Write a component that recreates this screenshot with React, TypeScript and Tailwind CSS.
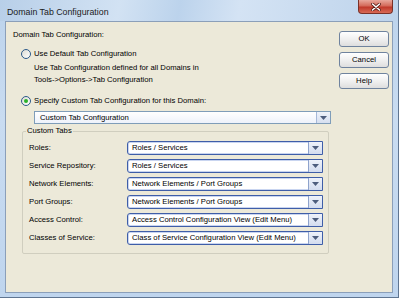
import React from "react";

const font = { fontFamily: '"Liberation Sans", Arial, sans-serif' };

function Arrow() {
  return (
    <svg width="7" height="4" viewBox="0 0 7 4">
      <path d="M0 0 H7 L3.5 4 Z" fill="#4d5d7d" />
    </svg>
  );
}

function Radio({ checked }: { checked?: boolean }) {
  return (
    <div className="w-[10px] h-[10px] rounded-full border border-[#2c5a8a] bg-[linear-gradient(135deg,#dcdcd4,#ffffff)] flex items-center justify-center shrink-0">
      {checked && <div className="w-[4px] h-[4px] rounded-full bg-[#2bb22b]" />}
    </div>
  );
}

function Combo({ value, big }: { value: string; big?: boolean }) {
  if (big) {
    return (
      <div className="h-[13px] w-[297px] border border-[#7f9db9] bg-white flex items-stretch">
        <div className="flex-1 flex items-center pl-[5px] bg-[linear-gradient(180deg,#ffffff,#eef2fb)] text-black">{value}</div>
        <div className="w-[14px] border-l border-[#a6b8d8] bg-[linear-gradient(180deg,#eef2fa,#d6dff0)] flex items-center justify-center">
          <Arrow />
        </div>
      </div>
    );
  }
  return (
    <div className="h-[14px] w-[196px] border border-[#3f5ea8] rounded-l-[3px] bg-white flex items-stretch shadow-[inset_0_0_0_1px_#c9d5f0]">
      <div className="flex-1 flex items-center pl-[4px] text-black whitespace-nowrap overflow-hidden">{value}</div>
      <div className="w-[14px] border-l border-[#8fa3cc] bg-[linear-gradient(180deg,#eef2fa,#d3dcef)] flex items-center justify-center">
        <Arrow />
      </div>
    </div>
  );
}

function Btn({ label }: { label: string }) {
  return (
    <div className="h-[16px] w-[50px] rounded-[3px] border border-[#6f839e] bg-[linear-gradient(180deg,#ffffff,#f0f0f0_50%,#dedede)] flex items-center justify-center text-black">
      {label}
    </div>
  );
}

const rows: [string, string][] = [
  ["Roles:", "Roles / Services"],
  ["Service Repository:", "Roles / Services"],
  ["Network Elements:", "Network Elements / Port Groups"],
  ["Port Groups:", "Network Elements / Port Groups"],
  ["Access Control:", "Access Control Configuration View (Edit Menu)"],
  ["Classes of Service:", "Class of Service Configuration View (Edit Menu)"],
];

export default function App() {
  return (
    <div
      style={font}
      className="w-[399px] h-[298px] overflow-hidden flex flex-col bg-[linear-gradient(180deg,#bcd3ec,#c9dcf1_40%,#bfd5ee)] border-r border-b border-[#5f7591] text-[7.7px] leading-[10px]"
    >
      {/* title bar */}
      <div className="h-[21px] flex items-start relative bg-[linear-gradient(100deg,#b8cfe8_0%,#d2e2f3_30%,#bcd3ec_45%,#d4e3f4_60%,#bdd3eb_100%)]">
        <div className="pl-[7px] pt-[7px] text-[8.8px] leading-[10px] text-[#1b1b1b]">Domain Tab Configuration</div>
        <div className="absolute left-[358px] top-0 w-[35px] h-[14px] rounded-b-[4px] border border-t-0 border-[#7a3128] bg-[linear-gradient(180deg,#e8a89c,#d46a5a_45%,#c0392b_55%,#d86a55)] flex items-center justify-center">
          <svg width="10" height="8" viewBox="0 0 10 8">
            <path d="M1.5 1 L8.5 7 M8.5 1 L1.5 7" stroke="#5a1a12" strokeWidth="3" strokeLinecap="round" />
            <path d="M1.5 1 L8.5 7 M8.5 1 L1.5 7" stroke="#ffffff" strokeWidth="1.6" strokeLinecap="round" />
          </svg>
        </div>
      </div>
      {/* body */}
      <div className="flex-1 px-[5px] pb-[4px]">
        <div className="h-full border border-[#8b9fb9] bg-[#ece9d9] flex">
          <div className="w-[333px] flex flex-col pt-[8px] pl-[7px] text-black">
            <div className="h-[10px] flex items-center">Domain Tab Configuration:</div>
            <div className="mt-[9px] h-[10px] flex items-center pl-[8px] gap-[3px]">
              <Radio />
              <span>Use Default Tab Configuration</span>
            </div>
            <div className="mt-[3px] pl-[21px] leading-[12px]">
              <div>Use Tab Configuration defined for all Domains in</div>
              <div>Tools-&gt;Options-&gt;Tab Configuration</div>
            </div>
            <div className="mt-[10px] h-[10px] flex items-center pl-[8px] gap-[3px]">
              <Radio checked />
              <span>Specify Custom Tab Configuration for this Domain:</span>
            </div>
            <div className="mt-[5px] pl-[21px]">
              <Combo big value="Custom Tab Configuration" />
            </div>
            <div className="mt-[7px] ml-[9px] w-[307px] h-[123px] border border-[#d0cebf] rounded-[2px] relative pt-[9px] pl-[6px] pr-[5px] flex flex-col gap-[4px]">
              <div className="absolute left-[3px] top-[-6px] px-[1px] bg-[#ece9d9] leading-[10px]">Custom Tabs</div>
              {rows.map(([l, v], i) => (
                <div key={i} className="h-[14px] flex items-center justify-between">
                  <span>{l}</span>
                  <Combo value={v} />
                </div>
              ))}
            </div>
          </div>
          <div className="w-[50px] flex flex-col gap-[5px] pt-[9px]">
            <Btn label="OK" />
            <Btn label="Cancel" />
            <Btn label="Help" />
          </div>
        </div>
      </div>
    </div>
  );
}
